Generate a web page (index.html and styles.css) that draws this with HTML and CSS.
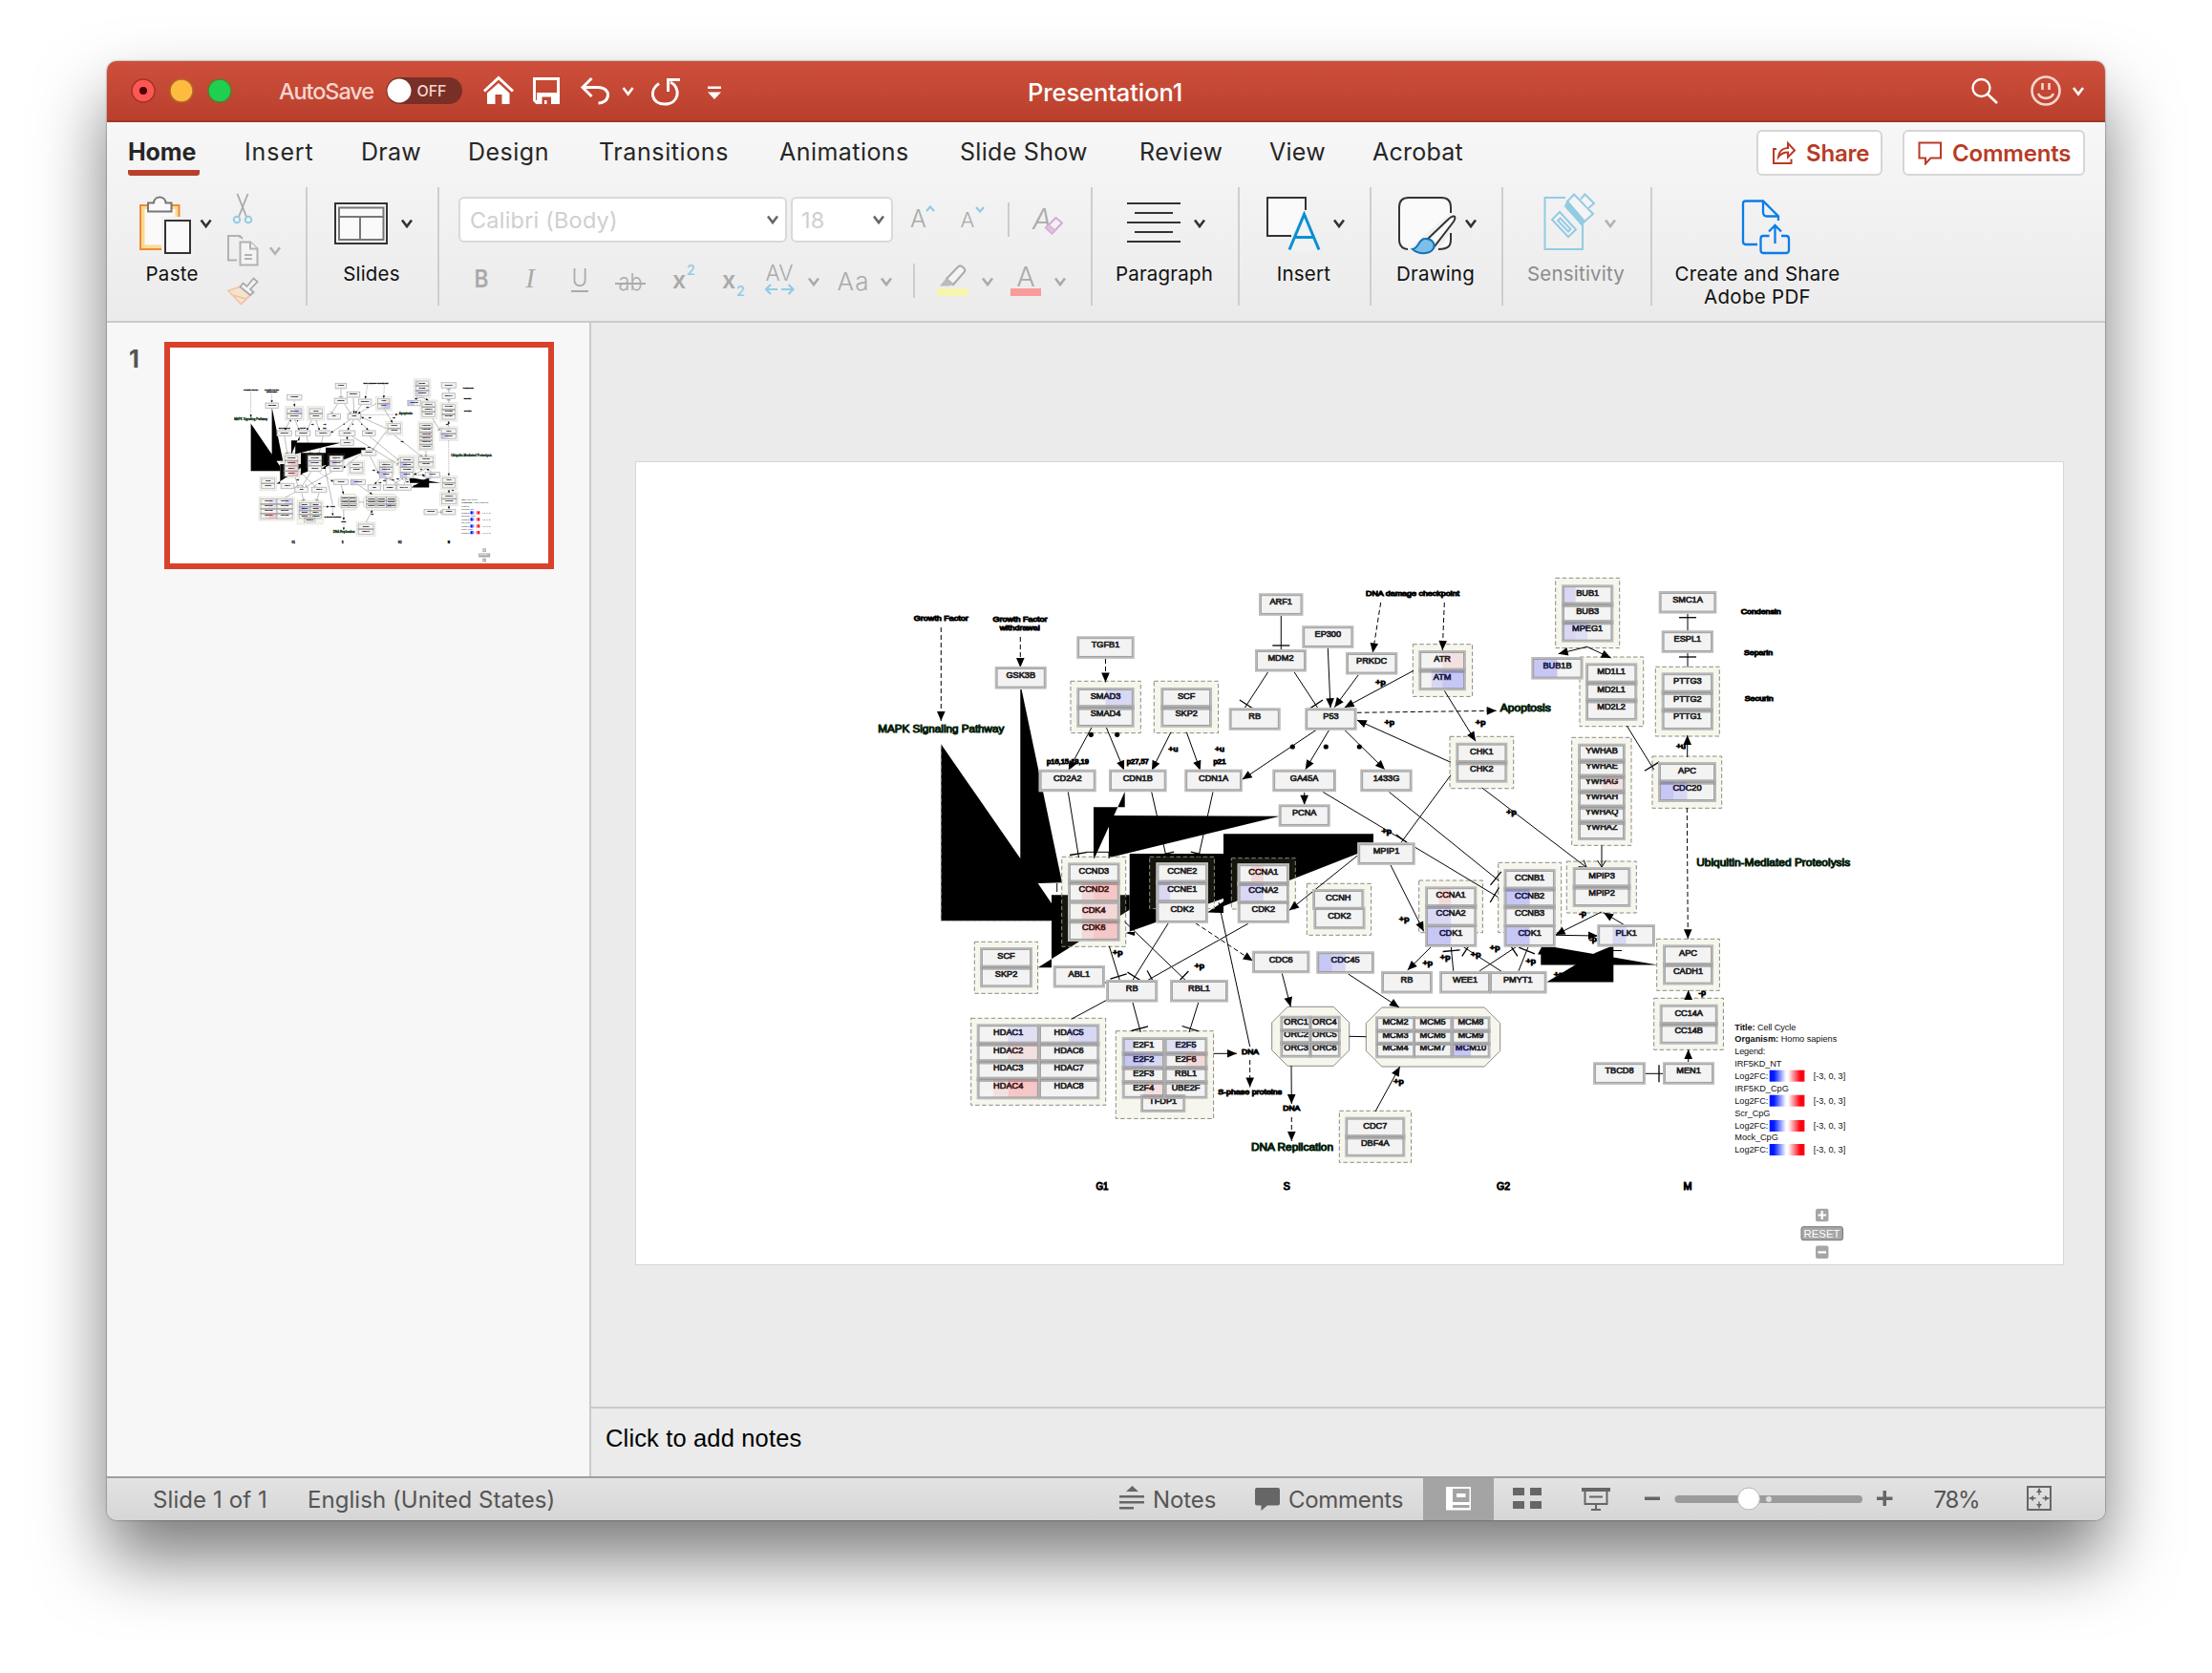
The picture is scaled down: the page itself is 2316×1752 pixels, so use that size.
FILE: index.html
```html
<!DOCTYPE html>
<html lang="en">
<head>
<meta charset="utf-8">
<title>Presentation1</title>
<link rel="stylesheet" href="styles.css">
</head>
<body>
<svg width="0" height="0" class="defs">
  <defs>
    <path id="chev" d="M-5-3.5L0 3L5-3.5" fill="none" stroke="currentColor" stroke-width="2.6"/>
  </defs>
</svg>
<div class="window">
  <header class="titlebar">
    <svg class="tb-left" viewBox="112 64 680 64">
      <circle cx="150" cy="96" r="12" fill="#fc5753" stroke="#a33127" stroke-width="1.5"/>
      <circle cx="150" cy="96" r="4" fill="#4e0002"/>
      <circle cx="190" cy="96" r="12" fill="#fdbc40" stroke="#b06b25" stroke-width="1.5"/>
      <circle cx="230" cy="96" r="12" fill="#1fcf4f" stroke="#5f7a2b" stroke-width="1.5"/>
      <text x="292" y="104.500" class="autosave" textLength="100">AutoSave</text>
      <rect x="404.500" y="82" width="79.500" height="28" rx="14" fill="#783026"/>
      <circle cx="418" cy="96" r="12.500" fill="#fff"/>
      <text x="436.500" y="102" class="off" textLength="31">OFF</text>
      <g fill="none" stroke="#fff" stroke-width="3">
        <path d="M507 96.500L522 82.500L537 96.500"/>
        <path d="M510 98.500L522 88L533.500 98.500V110H525.500V100H518.500V110H510Z" fill="#fff" stroke="none"/>
        <path d="M559.500 83.500H584.500V108.500H562L559.500 106Z"/>
        <path d="M562 98H583V109H562Z" fill="#fff" stroke="none"/>
        <path d="M567.500 102.500H577V110H572.500V106H570V110H567.500Z" fill="#c04631" stroke="none"/>
        <path d="M619.500 83L610 92.500L619.500 102M610 92.500H626C634.500 92.500 637 98 636.500 101C636 106.500 631 109 626.500 109"/>
        <path d="M690 88.500C679.500 95 681.500 110 696 110C711 110 713.500 93 702 87M699.500 97V84.500H712"/>
      </g>
      <path d="M741 91.500h14v2.600h-14zM741 97.500h14l-7 7.500z" fill="#fff"/>
      <use href="#chev" x="657.600" y="96.500" color="#fff"/>
    </svg>
    <div class="doc-title">Presentation1</div>
    <svg class="tb-right" viewBox="2052 64 152 64">
      <circle cx="2074.500" cy="93" r="9" fill="none" stroke="#fff" stroke-width="2.300"/>
      <path d="M2081 99.500L2091 109" stroke="#fff" stroke-width="2.600"/>
      <g fill="none" stroke="#f6d5ce" stroke-width="2.600">
        <circle cx="2142" cy="96" r="14.500"/>
        <path d="M2138.500 88v7M2145.500 88v7M2134 99c3 6.500 13 6.500 16 0"/>
      </g>
      <use href="#chev" x="2176" y="96.500" color="#fff"/>
    </svg>
  </header>

  <div class="ribbon">
    <nav class="tabs">
      <span class="tab active">Home</span><span class="tab t-insert">Insert</span><span class="tab t-draw">Draw</span><span class="tab t-design">Design</span><span class="tab t-trans">Transitions</span><span class="tab t-anim">Animations</span><span class="tab t-show">Slide Show</span><span class="tab t-review">Review</span><span class="tab t-view">View</span><span class="tab">Acrobat</span>
      <div class="actions">
        <button class="act share">
          <svg width="26" height="26" viewBox="0 0 26 26" fill="none" stroke="#b83b26" stroke-width="2"><path d="M5 9H2V24H20.500V19.500"/><path d="M7 17.500C7.500 11.500 11.500 8 17 8V3L24 10.500L17 17.500V12.500C13 12.500 9.500 14 7 17.500Z"/></svg>
          <span>Share</span></button>
        <button class="act comments">
          <svg width="26" height="26" viewBox="0 0 26 26" fill="none" stroke="#b83b26" stroke-width="2"><path d="M1.500 2.500H24V18.500H13.500L8 24.500V18.500H1.500Z"/></svg>
          <span>Comments</span></button>
      </div>
    </nav>
    <div class="groups">
      <section class="group g-paste">
        <svg class="icons" viewBox="112 196 208 124">
          <path d="M147 215H187.500V261H147Z" fill="#fadb93" stroke="#f0883a" stroke-width="2"/>
          <path d="M151.500 219H183.500V256.500H151.500Z" fill="#fafafa"/>
          <path d="M155 212.500H161C161.500 204.500 173 204.500 173.500 212.500H179.500V221.500H155Z" fill="#fafafa" stroke="#777" stroke-width="2"/>
          <path d="M169 227H203V270H169Z" fill="#f1f1f1"/>
          <path d="M173 231H199V265H173Z" fill="#fafafa" stroke="#333" stroke-width="2"/>
          <use href="#chev" x="215.600" y="234" color="#333"/>
          <text x="180" y="294" class="lbl" text-anchor="middle" textLength="55">Paste</text>
          <path d="M248.500 203L258 227M259.500 203L250 227" stroke="#aaa" stroke-width="1.800"/>
          <g fill="none" stroke="#94cbe4" stroke-width="2"><circle cx="248" cy="230" r="3.300"/><circle cx="260" cy="230" r="3.300"/></g>
          <g fill="#f4f4f4" stroke="#b2b2b2" stroke-width="2">
            <path d="M251 249V247H239V272.500H248M251 247l3 3" fill="none"/>
            <path d="M251.500 253.500H262L269.500 260.500V277.500H251.500Z"/><path d="M262 253.500V260.500H269.500M256 267h8M256 271h8"/>
          </g>
          <use href="#chev" x="288" y="262.700" color="#b2b2b2"/>
          <path d="M239 304.500L252 300L262 309L252.500 318.500ZM243 309L258 313" fill="#f6e3cf" stroke="#f3c3a4" stroke-width="1.800"/>
          <path d="M251.500 300.500L254.500 296.500L258.500 300L265.500 291.500L269.500 295L262 303L265.500 306L262 309Z" fill="#f4f4f4" stroke="#aaa" stroke-width="1.800"/>
        </svg>
      </section>
      <section class="group g-slides">
        <svg class="icons" viewBox="322 196 136 74">
          <rect x="351" y="213" width="54" height="42" fill="#fafafa" stroke="#333" stroke-width="2"/>
          <path d="M355 217.500H401.500V251H355ZM355 227H401.500M377 227V251" fill="none" stroke="#777" stroke-width="2"/>
          <use href="#chev" x="426" y="234" color="#333"/>
        </svg>
        <span class="label">Slides</span>
      </section>
      <section class="group g-font">
        <div class="row">
          <div class="field font-name"><span>Calibri (Body)</span><svg width="14" height="12" viewBox="-7 -6 14 12"><use href="#chev" color="#666"/></svg></div>
          <div class="field font-size"><span>18</span><svg width="14" height="12" viewBox="-7 -6 14 12"><use href="#chev" color="#666"/></svg></div>
          <svg class="row-tools" viewBox="941 206 196 48" fill="none">
            <text x="954" y="237.700" class="glyph" font-size="25" textLength="17">A</text>
            <text x="1006.500" y="237.700" class="glyph" font-size="22" textLength="15">A</text>
            <path d="M971 221l4-4.500l4 4.500M1023 217l4 4.500l4-4.500" stroke="#94cbe4" stroke-width="2.200"/>
            <path d="M1057 212v36" stroke="#ccc" stroke-width="2"/>
            <text x="1082" y="239.500" class="glyph" font-size="30" font-style="italic" textLength="19">A</text>
            <path d="M1096 238.500L1106.500 228L1113 233.500L1102.500 244.500Z" fill="#f2f2f2" stroke="#d3a9d3" stroke-width="2"/><path d="M1096 238.500L1099 235L1106 241L1102.500 244.500Z" fill="#dfc0df" stroke="#d3a9d3"/>
          </svg>
        </div>
        <svg class="format-row" viewBox="480 270 657 48" fill="none">
          <text x="504" y="301" class="glyph" font-size="26" font-weight="600" text-anchor="middle" textLength="15" lengthAdjust="spacingAndGlyphs">B</text>
          <text x="555" y="301" class="glyph serif" font-size="29" font-style="italic" text-anchor="middle">I</text>
          <text x="607" y="299.500" class="glyph" font-size="25" text-anchor="middle" textLength="17" lengthAdjust="spacingAndGlyphs">U</text><path d="M598 305h18" stroke="#aaa" stroke-width="2"/>
          <text x="660" y="303.500" class="glyph" font-size="24" text-anchor="middle" textLength="25" lengthAdjust="spacingAndGlyphs">ab</text><path d="M644 297h32" stroke="#aaa" stroke-width="2"/>
          <text x="704" y="301.700" class="glyph" font-size="25" font-weight="600">x</text><text x="719" y="287.500" font-size="14" font-weight="600" class="blue">2</text>
          <text x="756" y="301.700" class="glyph" font-size="25" font-weight="600">x</text><text x="771" y="309.500" font-size="14" font-weight="600" class="blue">2</text>
          <text x="801.500" y="293.500" class="glyph" font-size="23" textLength="29" lengthAdjust="spacingAndGlyphs">AV</text>
          <path d="M814 303H802M807 298L802 303L807 308M818 303H830.500M825.500 298L830.500 303L825.500 308" stroke="#94cbe4" stroke-width="2.200"/>
          <use href="#chev" x="852" y="295" color="#aaa"/>
          <text x="876.500" y="303.500" class="glyph" font-size="26" textLength="33">Aa</text>
          <use href="#chev" x="928" y="295" color="#aaa"/>
          <path d="M957 276v36" stroke="#ccc" stroke-width="2"/>
          <path d="M991 292L1003.500 279C1006 277 1011.500 281 1010 284.500L998 298Z" stroke="#aaa" stroke-width="2" fill="#f4f4f4"/><path d="M984 299.500L991 291L998 298L994 299.500Z" fill="#bbb"/>
          <rect x="981" y="302" width="33" height="8" fill="#f7f5ae"/>
          <use href="#chev" x="1034" y="295" color="#aaa"/>
          <text x="1074" y="300" class="glyph" font-size="29" text-anchor="middle">A</text>
          <rect x="1058" y="302" width="32" height="8" fill="#f89b9b"/>
          <use href="#chev" x="1110" y="295" color="#aaa"/>
        </svg>
      </section>
      <section class="group g-para">
        <svg class="icons" viewBox="1144 196 152 74">
          <path d="M1180 213H1236M1188 223H1228M1180 233H1236M1188 243H1228M1180 253H1236" stroke="#333" stroke-width="2"/>
          <use href="#chev" x="1256" y="234" color="#333"/>
        </svg>
        <span class="label">Paragraph</span>
      </section>
      <section class="group g-ins">
        <svg class="icons" viewBox="1298 196 136 74">
          <path d="M1352 247H1327V207H1367V220" fill="#fafafa" stroke="#333" stroke-width="2"/>
          <path d="M1348 263L1364.500 220L1382 263H1345Z" fill="#f2f2f2"/>
          <path d="M1350 261.500L1365.500 224.500L1381 261.500M1355 248.500H1376" fill="none" stroke="#0a90d2" stroke-width="3"/>
          <use href="#chev" x="1402" y="234" color="#333"/>
        </svg>
        <span class="label">Insert</span>
      </section>
      <section class="group g-draw">
        <svg class="icons" viewBox="1436 196 136 74">
          <path d="M1474 261C1468 260.500 1465 257 1465 251V217C1465 210 1468 207 1475 207H1509C1516 207 1519 210 1519 217V223M1519 244V251C1519 257 1517 261 1506 261" fill="#fafafa" stroke="#333" stroke-width="2"/>
          <path d="M1493 252L1516 230C1521 225 1526 225 1522 232L1502 258Z" fill="#fafafa" stroke="#333" stroke-width="2"/>
          <path d="M1479 261C1486 260 1485 250 1492 250C1499 249.500 1503 255 1501 260C1497 267 1485 266.500 1479 261Z" fill="#7dbfe8" stroke="#1272b6" stroke-width="2"/>
          <use href="#chev" x="1540" y="234" color="#333"/>
        </svg>
        <span class="label">Drawing</span>
      </section>
      <section class="group g-sens">
        <svg class="icons" viewBox="1574 196 154 74" fill="none">
          <path d="M1639 207H1617.500V261H1657V233" stroke="#94cbe4" stroke-width="2"/>
          <g stroke="#94cbe4" stroke-width="2" fill="#f4f4f4">
            <path d="M1633 222L1625 230L1642 248L1650 240.500Z"/><path d="M1633.500 228.500L1631 231L1642 242.500L1644.500 240Z"/>
            <path d="M1648 203.500L1641 211L1659 232L1668 224Z"/><path d="M1641 211L1639 216L1656 235L1659 232Z" fill="#94cbe4"/>
            <path d="M1655 208.500L1659.500 203.500L1669 213L1663 218"/>
          </g>
          <use href="#chev" x="1686" y="234" color="#b2b2b2"/>
        </svg>
        <span class="label dim">Sensitivity</span>
      </section>
      <section class="group g-pdf">
        <svg class="icons" viewBox="1730 196 222 74" fill="none" stroke="#0a7cec" stroke-width="2.300">
          <path d="M1840 256H1828C1826 256 1825 255 1825 253V213C1825 211 1826 210.500 1828 210.500H1846L1862 226.500V231M1846 210.500V222C1846 225 1847 226.500 1850 226.500H1862"/>
          <path d="M1852.500 247H1846C1844 247 1843.500 248 1843.500 250V262C1843.500 264 1844.500 265 1846.500 265H1870C1872 265 1873 264 1873 262V250C1873 248 1872 247 1870 247H1865M1858.500 255V236.500M1852 242.500L1858.500 236L1865 242.500"/>
        </svg>
        <span class="label">Create and Share<br>Adobe PDF</span>
      </section>
    </div>
  </div>

  <main class="body">
    <aside class="sidebar">
      <span class="num">1</span>
      <svg id="thumb" class="thumb" viewBox="666 484 1494 840" preserveAspectRatio="none"></svg>
    </aside>
    <div class="stage">
      <div class="canvas"><svg id="slide" class="slide" viewBox="666 484 1494 840"></svg></div>
      <div class="notes">Click to add notes</div>
    </div>
  </main>

  <footer class="status">
    <span class="s-slide">Slide 1 of 1</span>
    <span class="s-lang">English (United States)</span>
    <svg class="s-notes-i" width="27" height="28" viewBox="0 0 27 28"><path d="M13.500 0L20 6H7ZM0 10h26v2.400H0zM0 16h26v2.400H0zM0 22h15v2.400H0z" fill="#666"/></svg>
    <span class="s-notes">Notes</span>
    <svg class="s-com-i" width="27" height="28" viewBox="0 0 27 28"><path d="M2 2H24Q26 2 26 4V18.500Q26 20.500 24 20.500H13L6.500 26V20.500H2Q0 20.500 0 18.500V4Q0 2 2 2Z" fill="#666"/></svg>
    <span class="s-com">Comments</span>
    <svg class="s-tools" viewBox="1490 1548 714 44">
      <rect x="1490" y="1548" width="74" height="44" fill="#a4a4a4"/>
      <path d="M1514 1557H1540V1581.500H1514Z" fill="#fff"/><path d="M1521 1559h17.500v14h-17.500zM1521 1576h17.500v3h-17.500z" fill="#a4a4a4"/><path d="M1525 1564h9.500v4h-9.500z" fill="#fff"/>
      <path d="M1584 1558h12v8h-12zM1602 1558h12v8h-12zM1584 1572h12v8h-12zM1602 1572h12v8h-12z" fill="#666"/>
      <path d="M1656 1558h30v4h-30z" fill="#666"/><path d="M1659.500 1562V1575H1682.500V1562M1664 1567.500h14M1671 1575v6M1666 1581h10" fill="none" stroke="#666" stroke-width="2"/>
      <path d="M1722 1567.500h16v3.500h-16zM1965 1567.500h16.500v3.500h-16.500zM1971.500 1561h3.500v16h-3.500z" fill="#666"/>
      <rect x="1753.500" y="1566" width="196.500" height="8" rx="4" fill="#9b9b9b"/>
      <circle cx="1852" cy="1570" r="3" fill="#ddd"/>
      <circle cx="1831" cy="1569.500" r="11.500" fill="#fff" stroke="#b5b5b5"/>
      <text x="2024.500" y="1579" class="st" textLength="49">78%</text>
      <path d="M2123 1557H2147V1581H2123Z" fill="none" stroke="#666" stroke-width="2"/>
      <path d="M2135 1558.500v7M2135 1572.500v7M2124.500 1569h7M2138.500 1569h7" stroke="#666" stroke-width="1.400"/>
      <path d="M2132 1563l3-4l3 4zM2132 1575l3 4l3-4zM2129 1566l-4 3l4 3zM2141 1566l4 3l-4 3z" fill="#666"/>
    </svg>
  </footer>
</div>
<script src="pathway.js"></script>
</body>
</html>
```
FILE: styles.css
```css
* { box-sizing: border-box; }
body { margin: 0; width: 2316px; height: 1752px; overflow: hidden; background: #fff; font-family: Inter, "Liberation Sans", sans-serif; }
.defs { display: block; width: 0; height: 0; }
svg { display: block; flex: none; }
.window { width: 2092px; height: 1528px; margin: 64px 0 0 112px; border-radius: 10px; overflow: hidden; display: flex; flex-direction: column; background: #ebebeb;
  box-shadow: 0 0 2px rgba(0,0,0,.6), 0 40px 72px rgba(0,0,0,.52); }

.titlebar { height: 64px; flex: none; display: flex; justify-content: space-between; align-items: center; background: linear-gradient(#ce4f3b, #b9402d); border-bottom: 2px solid #9f3726; }
.tb-left { width: 680px; height: 64px; }
.tb-right { width: 152px; height: 64px; }
.autosave { font-size: 23.500px; font-weight: 500; fill: #f6d5ce; }
.off { font-size: 16px; font-weight: 500; fill: #f6d5ce; }
.doc-title { width: 166px; margin-left: 284px; margin-right: auto; color: #fff; font-size: 25.500px; letter-spacing: -.1px; font-weight: 500; padding-top: 3px; white-space: nowrap; }

.ribbon { height: 210px; flex: none; background: linear-gradient(#f7f7f7, #f2f2f2 40%, #ebebeb); border-bottom: 2px solid #c9c9c9; }
.tabs { height: 68px; display: flex; align-items: flex-start; padding: 8px 21px 0 22px; }
.tab { font-size: 25px; color: #262626; line-height: 30px; padding-top: 8px; white-space: nowrap; letter-spacing: .25px; width: 96px; }
.tab.active { font-weight: 700; width: 75px; margin-right: 47px; height: 48px; border-bottom: 6px solid #b9402d; border-radius: 3px; letter-spacing: -.1px; }
.t-insert { width: 122px; letter-spacing: .9px; }
.t-draw { width: 112px; }
.t-design { width: 137px; letter-spacing: .5px; }
.t-trans { width: 189px; letter-spacing: .6px; }
.t-anim { width: 189px; letter-spacing: .45px; }
.t-show { width: 188px; letter-spacing: .3px; }
.t-review { width: 136px; letter-spacing: .5px; }
.t-view { width: 108px; }
.actions { margin-left: auto; display: flex; gap: 21px; }
.act { height: 48px; display: flex; align-items: center; gap: 10px; background: #fff; border: 2px solid #d6d6d6; border-radius: 6px; color: #b83b26; font: 600 24px Inter, sans-serif; letter-spacing: -.2px; padding: 0 0 0 14px; }
.share { width: 132px; }
.comments { width: 191px; }

.groups { display: flex; height: 124px; }
.group { border-right: 2px solid #cecece; height: 124px; display: flex; flex-direction: column; align-items: center; }
.g-paste { width: 210px; }
.g-slides { width: 138px; }
.g-font { width: 684px; align-items: flex-start; padding: 10px 0 0 20px; }
.g-para { width: 154px; }
.g-ins, .g-draw { width: 138px; }
.g-sens { width: 156px; }
.g-pdf { width: 222px; border-right: 0; }
.icons { width: 100%; height: 74px; }
.g-paste .icons { height: 124px; }
.lbl { font-size: 20.500px; fill: #111; }
.label { font-size: 20.500px; line-height: 24px; color: #111; text-align: center; margin: 5px 2px 0 0; white-space: nowrap; letter-spacing: .2px; }
.g-pdf .label { letter-spacing: .3px; }
.dim { color: #8c8c8c; }
.row { display: flex; }
.field { height: 48px; background: #fff; border: 2px solid #d9d9d9; border-radius: 6px; display: flex; align-items: center; justify-content: space-between; padding: 0 6px 0 10px; color: #cfcfcf; font-size: 23.500px; letter-spacing: .2px; }
.font-name { width: 344px; margin-right: 4px; }
.font-size { width: 107px; margin-right: 5px; padding-left: 9px; }
.row-tools { width: 196px; height: 48px; }
.format-row { width: 657px; height: 48px; margin-top: 16px; }
.glyph { fill: #aaa; font-family: Inter, sans-serif; font-weight: 300; }
.glyph[font-weight="600"] { font-weight: 600; }
.serif { font-family: "Liberation Serif", serif; font-weight: 400; }
.blue { fill: #94cbe4; }

.body { flex: 1; display: flex; min-height: 0; }
.sidebar { width: 507px; background: #f7f7f7; border-right: 2px solid #c9c9c9; display: flex; align-items: flex-start; }
.num { width: 60px; padding: 22px 0 0 23px; font-size: 25px; line-height: 32px; font-weight: 700; color: #555; }
.thumb { width: 408px; height: 238px; margin-top: 20px; border: 6px solid #d8412c; background: #fff; }
.stage { flex: 1; display: flex; flex-direction: column; }
.canvas { height: 1135px; padding: 145px 0 0 46px; }
.slide { width: 1496px; height: 842px; border: 1px solid #d6d6d6; background: #fff; }
.notes { flex: 1; border-top: 2px solid #c9c9c9; padding: 15px 0 0 15px; font: 25.500px/32px "Liberation Sans", sans-serif; letter-spacing: .15px; color: #000; }

.status { height: 46px; flex: none; border-top: 2px solid #9f9f9f; background: linear-gradient(#e3e3e3, #d6d6d6); display: flex; align-items: center; color: #555; font-size: 24px; white-space: nowrap; }
.s-slide { width: 162px; margin-left: 48px; letter-spacing: .1px; }
.s-lang { width: 850px; letter-spacing: .05px; }
.s-notes-i { margin-right: 8px; }
.s-notes { width: 107px; letter-spacing: -.1px; }
.s-com-i { margin-right: 8px; }
.s-com { width: 141px; letter-spacing: -.3px; }
.s-tools { width: 714px; height: 44px; }
.st { font-size: 24px; fill: #555; }

/* pathway diagram */
.edge { stroke: #000; stroke-width: 1; fill: none; }
.dash { stroke-dasharray: 5 3; }
.grp { fill: #b2b26e; fill-opacity: .12; stroke: #8a8a84; stroke-width: 1; stroke-dasharray: 4.500 2.500; }
.oct { stroke-dasharray: none; }
.box { fill: #f3f3f3; }
.seam { fill: #b2b2b2; }
.gene { font: 9.200px "Liberation Sans", sans-serif; fill: #222; stroke: #222; stroke-width: .7; text-anchor: middle; }
.frame { fill: none; stroke: #afafaf; stroke-opacity: .85; stroke-width: 2.200; }
.frame2 { fill: none; stroke: #999; stroke-width: .9; }
.note { font-family: "Liberation Sans", sans-serif; text-anchor: middle; fill: #000; stroke: #000; stroke-width: 1.100; }
.path { fill: #0a5a1c; stroke: #04200a; stroke-width: 1; }
.legend { font: 9.200px "Liberation Sans", sans-serif; fill: #111; }
```
FILE: pathway.js
```js
// Cell cycle pathway: genes, groups and relations, in slide coordinates.
const out = [];
const add = s => out.push(s);

const B1 = 'rgba(0,0,255,.08)', B2 = 'rgba(0,0,255,.11)', B3 = 'rgba(0,0,255,.18)';
const R1 = 'rgba(255,0,0,.07)', R2 = 'rgba(255,0,0,.11)', R3 = 'rgba(255,0,0,.18)';
const tint = {
  SMAD3: [[.5, .75, B2], [.75, 1, B2]], ATR: [[.5, 1, R1]], ATM: [[.25, .5, B2], [.5, 1, B3]],
  BUB1: [[0, .25, B2]], MPEG1: [[0, .25, B2], [.25, .5, B1]], BUB1B: [[0, .5, B3]],
  YWHAG: [[.5, 1, R1]], CDC20: [[0, .25, B3], [.25, .5, B2]],
  CCND2: [[.25, .5, R2], [.5, 1, R3]], CDK4: [[.25, 1, R2]], CDK6: [[.25, .5, R2], [.5, 1, R3]],
  CCNE1: [[0, .25, B2]], CCNA1: [[.25, .5, R2]], CCNA2: [[0, .5, B2]], CDK1: [[0, .5, B3]],
  CCNB2: [[0, .5, B3]], PLK1: [[.25, .5, B2]], CDC45: [[0, .25, B3], [.25, .5, B2]],
  HDAC1: [[.5, 1, B1]], HDAC5: [[.5, 1, B2]], HDAC2: [[.5, 1, R1]], HDAC4: [[.25, .5, R1], [.5, 1, R3]],
  E2F1: [[0, .25, B2]], E2F2: [[0, .5, B3], [.5, 1, B2]], E2F5: [[0, .25, B1], [.25, .75, B1]], E2F6: [[.5, 1, R2]],
  E2F4: [[.5, 1, R1]], MCM10: [[0, .5, B3]]
};

// name, x, y, width, height, label offset
const nodes = [
  ['GSK3B', 1041.7, 698, 54], ['TGFB1', 1127.3, 666.3, 60.4], ['RB', 1286.7, 741.3, 54],
  ['CD2A2', 1087.7, 805.7, 60], ['CDN1B', 1161, 805.7, 60.6], ['CDN1A', 1240.3, 805.7, 60.6],
  ['ARF1', 1318, 621.3, 46.4], ['EP300', 1363.3, 655.3, 54], ['MDM2', 1314, 680, 54], ['PRKDC', 1409, 683, 54.3],
  ['BUB1B', 1603.3, 688, 54.3], ['P53', 1366.3, 741.3, 54.3], ['GA45A', 1332.3, 805.7, 66.7],
  ['1433G', 1424.3, 805.7, 54.4], ['PCNA', 1338.7, 842.3, 54], ['MPIP1', 1421.3, 882.3, 60.4],
  ['SMC1A', 1736.7, 619, 60.6], ['ESPL1', 1739.7, 660.3, 54.3],
  ['ABL1', 1102.7, 1011, 54.3], ['RB', 1158, 1026, 54.3], ['RBL1', 1225, 1026, 61],
  ['CCNH', 1374, 931, 54.3, 22], ['CDK2', 1375.3, 949.7, 54.3],
  ['PLK1', 1672.3, 968, 60.7], ['TBCD8', 1668, 1112.3, 55], ['MEN1', 1741, 1112.3, 54],
  ['CDC6', 1311, 995.7, 60.4], ['CDC45', 1378.3, 996.3, 60.7], ['RB', 1446, 1017, 54],
  ['WEE1', 1507, 1017, 54], ['PMYT1', 1559, 1017, 60.6]
];
// grey band where one stacked box overlaps the next
const seams = [[1196, 1146, 43, 4.8]];
const stack = (x, w, names, tops, h = 23.5, ty = 8.8) => names.forEach((n, i) => {
  nodes.push([n, x, tops[i], w, h, ty]);
  if (i && tops[i - 1] + h > tops[i]) seams.push([x, tops[i], w, tops[i - 1] + h - tops[i]]);
});
const run = (y, p, n) => Array.from({ length: n }, (_, i) => y + p * i);
stack(1127.3, 60.4, ['SMAD3', 'SMAD4'], run(720, 18.3, 2));
stack(1215.3, 53.7, ['SCF', 'SKP2'], run(720, 18.3, 2));
stack(1485.3, 49.6, ['ATR', 'ATM'], run(681, 18.7, 2));
stack(1635, 54.3, ['BUB1', 'BUB3', 'MPEG1'], run(612.3, 18.4, 3));
stack(1524.3, 54, ['CHK1', 'CHK2'], run(777.7, 18.5, 2));
stack(1660, 54.3, ['MD1L1', 'MD2L1', 'MD2L2'], run(694.3, 18.5, 3));
stack(1739.7, 54.3, ['PTTG3', 'PTTG2', 'PTTG1'], run(704.3, 18.5, 3));
stack(1652, 50, ['YWHAB', 'YWHAE', 'YWHAG', 'YWHAH', 'YWHAQ', 'YWHAZ'], run(778.7, 16, 6), 21.3, 7.5);
stack(1736, 61, ['APC', 'CDC20'], run(798, 18.5, 2));
stack(1118, 54.7, ['CCND3', 'CCND2', 'CDK4', 'CDK6'], [903.3, 921.7, 943.7, 962.3]);
stack(1210.5, 54.5, ['CCNE2', 'CCNE1', 'CDK2'], [903.3, 921.7, 943.3]);
stack(1295.7, 54.3, ['CCNA1', 'CCNA2', 'CDK2'], [904.3, 923, 943.3]);
stack(1026, 55, ['SCF', 'SKP2'], run(992, 18.8, 2));
stack(1022.7, 66, ['HDAC1', 'HDAC2', 'HDAC3', 'HDAC4'], run(1072.3, 18.5, 4));
stack(1087, 64.3, ['HDAC5', 'HDAC6', 'HDAC7', 'HDAC8'], run(1072.3, 18.5, 4));
stack(1194, 47.3, ['TFDP1'], [1146], 19, 7);
stack(1174.7, 45.3, ['E2F1', 'E2F2', 'E2F3', 'E2F4'], run(1086, 15, 4), 19.7, 7.4);
stack(1218.7, 45.7, ['E2F5', 'E2F6', 'RBL1', 'UBE2F'], run(1086, 15, 4), 19.7, 7.4);
stack(1492, 54.3, ['CCNA1', 'CCNA2', 'CDK1'], [928.3, 947, 968.3]);
stack(1574.5, 54.3, ['CCNB1', 'CCNB2', 'CCNB3', 'CDK1'], [910, 928.7, 947.3, 968.3]);
stack(1646.7, 60.7, ['MPIP3', 'MPIP2'], run(908, 18.5, 2));
stack(1741, 53, ['APC', 'CADH1'], run(989.3, 18.7, 2));
stack(1737.7, 61, ['CC14A', 'CC14B'], run(1051.7, 18.5, 2));
stack(1340.3, 33.5, ['ORC1', 'ORC2', 'ORC3'], run(1063.7, 13.3, 3), 17.4, 6.2);
stack(1370, 33.7, ['ORC4', 'ORC5', 'ORC6'], run(1063.7, 13.3, 3), 17.4, 6.2);
stack(1440, 42, ['MCM2', 'MCM3', 'MCM4'], run(1064.3, 13.3, 3), 17.4, 6);
stack(1479, 42.3, ['MCM5', 'MCM6', 'MCM7'], run(1064.3, 13.3, 3), 17.4, 6);
stack(1519.3, 41.3, ['MCM8', 'MCM9', 'MCM10'], run(1064.3, 13.3, 3), 17.4, 6);
stack(1408.3, 63, ['CDC7', 'DBF4A'], run(1169.7, 18.5, 2));

const groups = [
  [1121, 713.3, 73.3, 54.3], [1208.3, 713.3, 67.3, 54.3], [1479.3, 674.7, 62.3, 54.7], [1628.7, 605.3, 67, 73.3],
  [1518, 771.3, 66.7, 54.4], [1654, 688, 66.7, 72.7], [1733.3, 698.3, 67, 72.7], [1645.7, 772.3, 62.3, 113],
  [1730, 792, 72.7, 54.3], [1111.7, 897.3, 67, 94], [1203.7, 897.3, 67.7, 54.3], [1289.3, 898.7, 67, 53.3],
  [1020.3, 986.3, 66.3, 54], [1016.7, 1066.3, 141, 91], [1168.3, 1079.7, 102.3, 91.7], [1368.3, 925.3, 67.3, 54],
  [1485.7, 922, 66.7, 54.7], [1568.7, 903.3, 66, 73.3], [1640.3, 902, 73, 54], [1734.7, 983.3, 65.7, 54],
  [1731.7, 1045.3, 72.7, 54], [1402.3, 1163.3, 75.3, 54]
];
const octagons = [[1331.7, 1054.3, 81, 62], [1430.3, 1055, 140.4, 62]];

// filled connector areas
const areas = [
  '985.3,779.3 1068.3,899 1068.3,722 1069.6,722 1112,924.3 1086.7,925 1101,946 1101,964.3 985.3,964.3',
  '1086.7,1013.3 1101,1013.3 1101,937.3 1182.7,937.3 1182.7,952.7',
  '1182.7,894 1281,894 1421.3,891 1178.7,977 1188,980 1188,976 1182.7,976',
  '1281,873.3 1438,873.3 1438,883 1421.3,894 1281,949 1281,956 1264,955.5 1281,944',
  '1340,854.7 1161,854 1161,898.3',
  '1177.7,829 1177.7,845.3 1145,845.3 1145,897 1146.7,897',
  '1610,999.5 1614.5,991 1625,991.5 1735.7,1010.5 1613.3,1010.5 1613.3,999.5',
  '1619.3,1028.5 1689.3,1028.5 1689.3,990 1670,998'
];

// x1, y1, x2, y2, end (a arrow, t bar, o open arrow), dashed
const edges = [
  [985.3, 657, 985.3, 755, 'a', 1], [1068.3, 667, 1068.3, 699, 'a', 1], [1157.5, 690, 1157.5, 714.5, 'a', 1],
  [1143, 761.7, 1118.7, 806.7, 'a'], [1158.3, 761.7, 1177, 806.7, 'a'], [1226, 766.7, 1206, 806.7, 'a'], [1242.3, 766.7, 1256.7, 806.7, 'a'],
  [1118.3, 829.3, 1129.5, 898, 't'], [1205.7, 829.3, 1221.3, 898, 't'], [1270, 829.3, 1254.7, 898, 't'],
  [1137, 892.3, 1161.7, 892.3], [1145.7, 892, 1145.7, 899], [1161, 892, 1161, 899], [1106.7, 925, 1106.7, 934],
  [1341.3, 645, 1341.3, 680, 't'], [1390.3, 679, 1393, 741.3, 'a'], [1422.3, 706.7, 1397.3, 740.7, 'a'],
  [1445.7, 631, 1437.3, 683.5, 'a', 1], [1512.3, 631, 1510.3, 681, 'a', 1],
  [1327.7, 703.7, 1303.3, 741.3, 't'], [1355, 703.7, 1379.7, 741.3, 't'], [1480, 702.3, 1407.7, 741, 'a'],
  [1512.3, 723.3, 1545, 776.3, 'a'], [1420.7, 746.3, 1566.7, 744.3, 'a', 1], [1519, 798.3, 1420.7, 754, 'a'],
  [1378.3, 764.3, 1300.7, 816.3, 'a'], [1391.7, 764.3, 1366.7, 806, 'a'], [1407.7, 764.3, 1450, 806, 'a'],
  [1365.7, 830, 1365.7, 842.7, 'a'], [1385, 829.3, 1568.3, 939.3, 't'], [1454.3, 829.3, 1569.3, 922.3, 't'],
  [1519, 811.7, 1466.7, 882.7, 't'], [1551.7, 825, 1661, 908.3, 'o'], [1456, 906, 1490.7, 975.3, 'a'],
  [1421.3, 896, 1350, 953.3, 'a'], [1661.7, 677.3, 1631.7, 684.7, 'a'], [1661.7, 677.3, 1686.7, 689, 'a'],
  [1767, 660.7, 1767, 642.7, 't'], [1767, 698.5, 1767, 684, 't'], [1703.3, 760, 1731.7, 806, 't'],
  [1766.7, 793, 1766.7, 770, 'a'], [1766.3, 846, 1767.3, 983.3, 'a', 1], [1677, 885.3, 1677, 908, 'o'],
  [1676.7, 955, 1628.7, 979, 'a'], [1700, 968.3, 1679, 955.7, 'a'], [1628.7, 979.3, 1673, 980, 'a'],
  [1177.3, 965, 1241, 1026.3, 't'], [1161.3, 990.7, 1172.3, 1026.3, 't'], [1223.3, 966.7, 1186, 1026.3, 't'],
  [1306.7, 967.3, 1202, 1026.3, 't'], [1251.7, 966.7, 1311.7, 1006.3, 'a', 1], [1308.7, 1096, 1276, 945],
  [1308.7, 1110, 1308.7, 1138.5, 'a', 1], [1270.7, 1103.3, 1295, 1103.3, 'a'], [1158, 1047.7, 1121.7, 1067.3],
  [1186, 1050, 1194.3, 1081, 't'], [1254.7, 1050, 1245, 1081, 't'], [1156, 1028, 1159, 1030],
  [1342.3, 1019.3, 1351.3, 1054.3, 'a'], [1411.7, 1020, 1465, 1055, 'a'], [1412.7, 1085.3, 1430.3, 1085.7],
  [1352, 1116, 1352.3, 1156, 'a'], [1352.3, 1170, 1352.3, 1195, 'a', 1], [1440, 1164, 1465.7, 1117, 'a'],
  [1498.3, 991.7, 1473.7, 1016, 'a'], [1521.7, 1016.7, 1519.3, 991.7, 't'], [1572.7, 1017.7, 1532.3, 991.7, 't'],
  [1549.3, 1016.7, 1587.3, 991.7, 't'], [1590, 1016.7, 1600, 991.7, 't'], [1689, 995.5, 1698, 995.5],
  [1767.7, 1112, 1767.7, 1099, 'a'], [1767.7, 1045.7, 1767.7, 1037, 'a'], [1723, 1124.3, 1741, 1124.3, 't']
];
const dots = [[1142.3, 769.3], [1169.7, 769.3], [1353.3, 782], [1388.3, 782], [1423.3, 782]];

// text, centre x, centre y, width, size
const labels = [
  ['Growth Factor', 985.3, 647, 57, 8], ['Growth Factor', 1068, 648.5, 57, 8], ['withdrawal', 1067.7, 657.7, 42, 8],
  ['DNA damage checkpoint', 1479, 621.7, 98, 8], ['Condensin', 1843.7, 640, 42, 8], ['Separin', 1841, 683, 30, 8],
  ['Securin', 1841.7, 731, 30, 8], ['DNA', 1309, 1101, 18, 8], ['DNA', 1352.3, 1160.5, 18, 8], ['S-phase proteins', 1308.7, 1143.5, 67, 8],
  ['p16,15,18,19', 1118, 797, 44, 7.5], ['p27,57', 1191.3, 797, 23, 7.5], ['p21', 1277, 797, 13, 7.5],
  ['+u', 1228.3, 784, 10, 8], ['+u', 1277, 784, 10, 8], ['+u', 1760, 781, 10, 8],
  ['G1', 1154, 1242.5, 13, 10.5], ['S', 1347.3, 1242.5, 7, 10.5], ['G2', 1574, 1242.5, 14, 10.5], ['M', 1767, 1242.5, 9, 10.5]
];
[[1445.3, 714], [1454.7, 756.7], [1550, 756.7], [1582.3, 850.3], [1451.7, 870], [1170, 997], [1255.7, 1011.3], [1470, 962.3],
 [1494.7, 1008], [1513, 1002], [1545, 999.3], [1565, 992.7], [1602.7, 1006], [1464.3, 1132.7], [1632, 1020]]
  .forEach(([x, y]) => labels.push(['+p', x, y, 10.5, 8]));
[[1657, 956.7], [1782.3, 1039.3], [1668, 983]].forEach(([x, y]) => labels.push(['-p', x, y, 7.5, 8]));
const pathways = [
  ['MAPK Signaling Pathway', 985.3, 763.5, 132, 11], ['Apoptosis', 1597.3, 741, 53, 11],
  ['Ubiquitin-Mediated Proteolysis', 1856.7, 903, 161, 11], ['DNA Replication', 1353, 1201, 86, 11]
];

const line = (a, b, c, d, cls = 'edge') => add(`<path class="${cls}" d="M${a} ${b}L${c} ${d}"/>`);
areas.forEach(p => add(`<polygon points="${p}"/>`));
add('<path d="M985.3 780V964.3H1101" fill="none" stroke="#999" stroke-width=".8" stroke-dasharray="4 3"/>');
groups.forEach(([x, y, w, h]) => add(`<rect class="grp" x="${x}" y="${y}" width="${w}" height="${h}"/>`));
octagons.forEach(([x, y, w, h]) => add(`<path class="grp oct" d="M${x + 16.5} ${y}h${w - 33}l16.500 16.500v${h - 33}l-16.500 16.500h${33 - w}l-16.500 -16.500v${33 - h}z"/>`));
edges.forEach(([x1, y1, x2, y2, end, dashed]) => {
  line(x1, y1, x2, y2, dashed ? 'edge dash' : 'edge');
  const l = Math.hypot(x2 - x1, y2 - y1), ux = (x2 - x1) / l, uy = (y2 - y1) / l;
  const at = (back, side) => `${(x2 - ux * back - uy * side).toFixed(1)} ${(y2 - uy * back + ux * side).toFixed(1)}`;
  if (end === 'a') add(`<path d="M${at(0, 0)}L${at(10, 4.3)}L${at(10, -4.3)}Z"/>`);
  if (end === 'o') add(`<path class="edge" stroke-width="1.300" d="M${at(7, 4.5)}L${at(0, 0)}L${at(7, -4.5)}"/>`);
  if (end === 't') add(`<path d="M${at(4, 9)}L${at(4, -9)}" stroke="#000" stroke-width="1.300"/>`);
});
dots.forEach(([x, y]) => add(`<circle cx="${x}" cy="${y}" r="2.600"/>`));
nodes.forEach(([n, x, y, w, h = 23.5]) => add(`<rect class="box" x="${x}" y="${y}" width="${w}" height="${h}"/>`));
nodes.forEach(([n, x, y, w, h = 23.5, t = 8.8]) => add(`<text class="gene" x="${x + w / 2}" y="${y + t + 3.1}">${n}</text>`));
seams.forEach(([x, y, w, h]) => add(`<rect class="seam" x="${x}" y="${y}" width="${w}" height="${h}"/>`));
nodes.forEach(([n, x, y, w, h = 23.5]) => {
  (tint[n] || []).forEach(([a, b, c]) => add(`<rect x="${x + 2 + (w - 4) * a}" y="${y + 2}" width="${(w - 4) * (b - a)}" height="${h - 4}" fill="${c}"/>`));
  add(`<rect class="frame" x="${x + 1.1}" y="${y + 1.1}" width="${w - 2.2}" height="${h - 2.2}"/>`);
  add(`<rect class="frame2" x="${x + 2.4}" y="${y + 2.4}" width="${w - 4.8}" height="${h - 4.8}"/>`);
});
const word = (cls, [s, x, y, w, z]) => add(`<text class="${cls}" x="${x}" y="${y + z * .34}" font-size="${z}" textLength="${w}" lengthAdjust="spacingAndGlyphs">${s}</text>`);
labels.forEach(l => word('note', l));
pathways.forEach(l => word('note path', l));

add('<defs><linearGradient id="fc"><stop offset="0" stop-color="#0018ff"/><stop offset=".12" stop-color="#0018ff"/><stop offset=".47" stop-color="#fff"/><stop offset=".53" stop-color="#fff"/><stop offset=".88" stop-color="#ff0010"/><stop offset="1" stop-color="#ff0010"/></linearGradient></defs>');
const leg = (s, x, y, w) => add(`<text class="legend" x="${x}" y="${y + 3.2}" textLength="${w}">${s}</text>`);
leg('<tspan font-weight="700">Title:</tspan> Cell Cycle', 1816.3, 1076, 64);
leg('<tspan font-weight="700">Organism:</tspan> Homo sapiens', 1816.3, 1088, 107);
leg('Legend:', 1816.3, 1101, 32);
[['IRF5KD_NT', 1113.7, 49], ['IRF5KD_CpG', 1139.7, 56.5], ['Scr_CpG', 1166, 37], ['Mock_CpG', 1191, 45.5]].forEach(([s, y, w]) => {
  leg(s, 1816.3, y, w);
  leg('Log2FC:', 1816.3, y + 13, 35);
  add(`<rect x="1852.700" y="${y + 7}" width="36.700" height="12" fill="url(#fc)"/>`);
  leg('[-3, 0, 3]', 1898.7, y + 13, 33.5);
});

add('<g fill="#a6a6a6"><rect x="1901" y="1265.700" width="13.500" height="13.500" rx="2"/><rect x="1901" y="1304.500" width="13.500" height="13.500" rx="2"/><rect x="1886" y="1284.700" width="43.500" height="14" rx="2" stroke="#777"/></g>');
add('<path d="M1903.500 1272.500h8.500M1907.700 1268v9M1903.500 1311.300h8.500" stroke="#fff" stroke-width="2.200"/>');
add('<text x="1888.500" y="1295.700" font-family="Liberation Sans" font-size="11" fill="#fff" textLength="38" lengthAdjust="spacingAndGlyphs">RESET</text>');

const drawing = out.join('');
document.getElementById('slide').innerHTML = drawing;
document.getElementById('thumb').innerHTML = drawing;
```
